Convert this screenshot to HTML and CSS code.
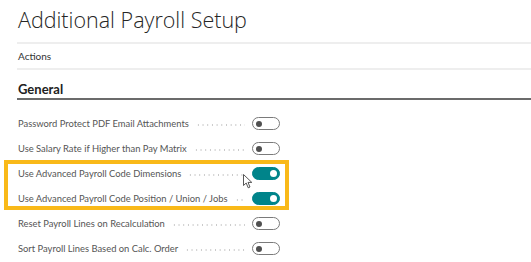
FILE: index.html
```html
<!DOCTYPE html>
<html lang="en">
<head>
    <meta charset="UTF-8">
    <meta name="viewport" content="width=device-width, initial-scale=1.0">
    <title>Additional Payroll Setup</title>
    <link rel="stylesheet" href="styles.css">
</head>
<body>
    <div class="page">
        <h1 class="page-title">Additional Payroll Setup</h1>

        <div class="action-bar">
            <span class="action-link">Actions</span>
        </div>

        <div class="section">
            <h2 class="section-title">General</h2>

            <div class="field-list">
                <div class="field">
                    <span class="field-label">Password Protect PDF Email Attachments</span>
                    <span class="leader"></span>
                    <span class="toggle"></span>
                </div>
                <div class="field">
                    <span class="field-label">Use Salary Rate if Higher than Pay Matrix</span>
                    <span class="leader"></span>
                    <span class="toggle"></span>
                </div>

                <!-- Highlighted group -->
                <div class="highlight">
                    <div class="field">
                        <span class="field-label">Use Advanced Payroll Code Dimensions</span>
                        <span class="leader"></span>
                        <span class="toggle on"></span>
                    </div>
                    <div class="field">
                        <span class="field-label">Use Advanced Payroll Code Position / Union / Jobs</span>
                        <span class="leader"></span>
                        <span class="toggle on"></span>
                    </div>
                    <svg class="cursor" width="10" height="15" viewBox="0 0 10 15">
                        <path d="M0.5 0.5 L0.5 11.5 L3.2 9 L5.2 13.8 L7 13 L5 8.4 L8.8 8.4 Z" fill="#fff" stroke="#444" stroke-width="0.9" stroke-linejoin="round"/>
                    </svg>
                </div>

                <div class="field">
                    <span class="field-label">Reset Payroll Lines on Recalculation</span>
                    <span class="leader"></span>
                    <span class="toggle"></span>
                </div>
                <div class="field">
                    <span class="field-label">Sort Payroll Lines Based on Calc. Order</span>
                    <span class="leader"></span>
                    <span class="toggle"></span>
                </div>
            </div>
        </div>
    </div>
</body>
</html>
```

FILE: styles.css
```css
body {
    margin: 0;
    background-color: #ffffff;
    font-family: "Open Sans", "Noto Sans", sans-serif;
    color: #212121;
}

.page {
    padding: 0 0 0 17px;
}

.page-title {
    margin: 0;
    padding: 5px 0 0 1px;
    height: 37px;
    font-size: 21.5px;
    font-weight: 300;
    color: #262626;
    border-bottom: 2px solid #eeeeee;
}

.action-bar {
    height: 24px;
    display: flex;
    align-items: center;
    padding-left: 1px;
    border-bottom: 2px solid #eeeeee;
}

.action-link {
    font-family: "Lato", sans-serif;
    font-size: 10px;
    color: #333333;
}

.section-title {
    margin: 0;
    height: 30px;
    box-sizing: border-box;
    display: flex;
    align-items: flex-end;
    padding: 0 0 1px 1px;
    font-family: "Lato", sans-serif;
    font-size: 13px;
    font-weight: 700;
    color: #212121;
    border-bottom: 2px solid #6b6b6b;
}

.field-list {
    padding-top: 11px;
    width: 263px;
}

.field {
    height: 25px;
    display: flex;
    align-items: center;
    padding-left: 1px;
}

.field-label {
    font-family: "Lato", sans-serif;
    font-size: 9.4px;
    color: #555555;
    white-space: nowrap;
}

.leader {
    flex: 1;
    height: 4px;
    margin: 3px 7px 0 7px;
    background-image: radial-gradient(circle, #c8c8c8 0.55px, transparent 0.9px);
    background-size: 4.7px 4px;
    background-repeat: repeat-x;
}

.toggle {
    width: 26px;
    height: 11px;
    border: 1px solid #7a7a7a;
    border-radius: 7px;
    position: relative;
    flex-shrink: 0;
}

.toggle::after {
    content: "";
    position: absolute;
    left: 2.5px;
    top: 2.5px;
    width: 6px;
    height: 6px;
    border-radius: 50%;
    background-color: #505050;
}

.toggle.on {
    background-color: #00848a;
    border-color: #00848a;
}

.toggle.on::after {
    left: auto;
    right: 2px;
    top: 2px;
    width: 7px;
    height: 7px;
    background-color: #ffffff;
}

.highlight {
    position: relative;
}

.highlight::after {
    content: "";
    position: absolute;
    top: -1px;
    bottom: 1px;
    left: -13px;
    right: -9px;
    border: 4.5px solid #f9b919;
    pointer-events: none;
}

.cursor {
    position: absolute;
    left: 226px;
    top: 13px;
}
```
